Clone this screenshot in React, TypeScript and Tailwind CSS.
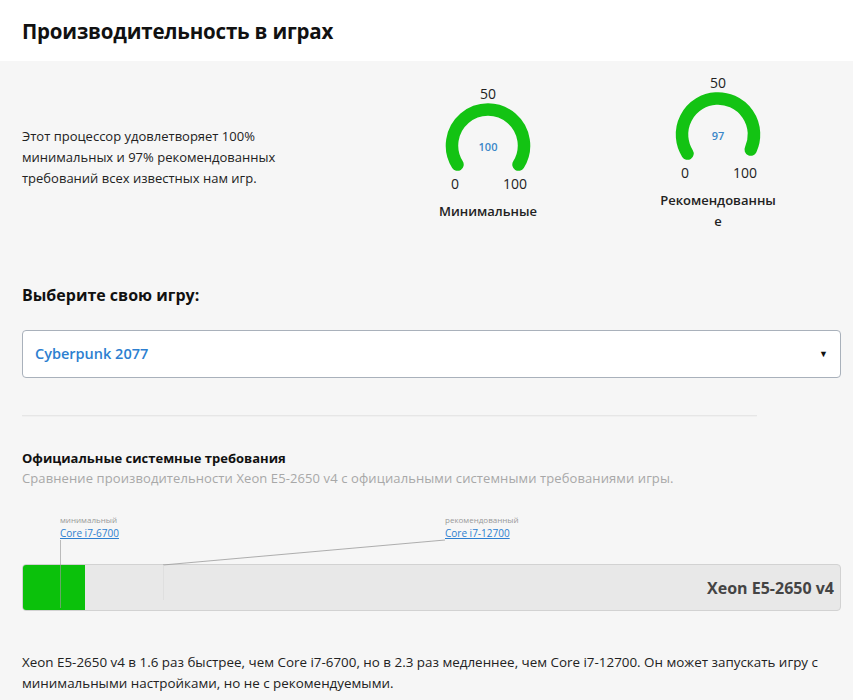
import React from "react";

const FONT = { fontFamily: '"Open Sans", "Noto Sans", "Liberation Sans", sans-serif' };

function Gauge({ value, label }: { value: number; label: React.ReactNode }) {
  const cx = 60;
  const cy = 62.5;
  const r = 36;
  const start = 212;
  const sweep = 244 * (value / 100);
  const end = start - sweep;
  const rad = (d: number) => (d * Math.PI) / 180;
  const x1 = cx + r * Math.cos(rad(start));
  const y1 = cy - r * Math.sin(rad(start));
  const x2 = cx + r * Math.cos(rad(end));
  const y2 = cy - r * Math.sin(rad(end));
  const large = sweep > 180 ? 1 : 0;
  return (
    <div className="flex w-[120px] flex-col items-center">
      <svg width="120" height="110" viewBox="0 0 120 110">
        <path
          d={`M ${x1} ${y1} A ${r} ${r} 0 ${large} 1 ${x2} ${y2}`}
          fill="none"
          stroke="#13c313"
          strokeWidth="12.5"
          strokeLinecap="round"
        />
        <text x="60" y="16" textAnchor="middle" fontSize="14" fill="#222" style={FONT}>
          50
        </text>
        <text x="60" y="68" textAnchor="middle" fontSize="11" fontWeight="600" fill="#3a87c8" style={FONT}>
          {value}
        </text>
        <text x="27" y="106" textAnchor="middle" fontSize="14" fill="#222" style={FONT}>
          0
        </text>
        <text x="87" y="106" textAnchor="middle" fontSize="14" fill="#222" style={FONT}>
          100
        </text>
      </svg>
      <div className="mt-[8px] text-center text-[13px] font-semibold leading-[21px] text-[#222]">{label}</div>
    </div>
  );
}

export default function App() {
  return (
    <div className="min-h-[700px] bg-[#f6f6f6] text-[#222]" style={FONT}>
      <div className="flex h-[61px] items-center bg-white px-[22px]">
        <h1 className="text-[20.5px] font-bold leading-[28px] tracking-[-0.2px] text-[#111]">Производительность в играх</h1>
      </div>

      <div className="px-[22px]">
        <div className="flex items-center pt-[11px]">
          <p className="mt-[10px] w-[406px] pr-[120px] text-[13px] leading-[21px] text-[#222]">
            Этот процессор удовлетворяет 100% минимальных и 97% рекомендованных требований всех известных нам игр.
          </p>
          <Gauge value={100} label="Минимальные" />
          <div className="w-[110px]" />
          <Gauge
            value={97}
            label={
              <>
                Рекомендованны
                <br />е
              </>
            }
          />
        </div>

        <h2 className="mt-[51px] text-[16px] font-bold leading-[24px] text-[#111]">Выберите свою игру:</h2>

        <div className="mt-[23px] flex h-[48px] w-[819px] items-center justify-between rounded-[4px] border border-[#a9b1bb] bg-white pl-[12px] pr-[12px]">
          <span className="text-[14.5px] font-semibold text-[#2d7fd0]">Cyberpunk 2077</span>
          <span className="text-[9px] text-[#111]">▼</span>
        </div>

        <div className="mt-[37px] h-px w-[735px] bg-[#e6e6e6] shadow-[0_1px_1px_rgba(0,0,0,0.03)]" />

        <h3 className="mt-[32px] text-[13px] font-bold leading-[20px] text-[#111]">Официальные системные требования</h3>
        <p className="text-[13px] leading-[20px] tracking-[0.1px] text-[#a8a8a8]">
          Сравнение производительности Xeon E5-2650 v4 с официальными системными требованиями игры.
        </p>

        <div className="relative mt-[24px] w-[819px] pt-[52px]">
          <div className="absolute left-[38px] top-[1px] leading-none">
            <div className="text-[8px] leading-[14px] text-[#999]">минимальный</div>
            <div className="text-[10px] leading-[13px] text-[#2d7fd0] underline">Core i7-6700</div>
          </div>
          <div className="absolute left-[423px] top-[1px] leading-none">
            <div className="text-[8px] leading-[14px] text-[#999]">рекомендованный</div>
            <div className="text-[10px] leading-[13px] text-[#2d7fd0] underline">Core i7-12700</div>
          </div>

          <div className="relative flex h-[47px] items-center justify-end overflow-hidden rounded-[4px] border border-[#d2d2d2] bg-[#e8e8e8] pr-[6px]">
            <div className="absolute bottom-0 left-0 top-0 w-[62px] bg-[#0bc10b]" />
            <span className="relative text-[16px] font-bold text-[#444]">Xeon E5-2650 v4</span>
          </div>

          <svg className="pointer-events-none absolute left-0 top-0" width="819" height="99" viewBox="0 0 819 99">
            <line x1="38.5" y1="28" x2="38.5" y2="96" stroke="#9a9a9a" strokeWidth="0.8" opacity="0.8" />
            <line x1="423" y1="28" x2="141" y2="53" stroke="#9a9a9a" strokeWidth="0.8" />
            <line x1="141.5" y1="53" x2="141.5" y2="88" stroke="#dcdcdc" strokeWidth="0.8" />
          </svg>
        </div>

        <p className="mt-[41px] text-[13.4px] leading-[21px] text-[#222]">
          Xeon E5-2650 v4 в 1.6 раз быстрее, чем Core i7-6700, но в 2.3 раз медленнее, чем Core i7-12700. Он может запускать игру с минимальными настройками, но не с рекомендуемыми.
        </p>
      </div>
    </div>
  );
}
